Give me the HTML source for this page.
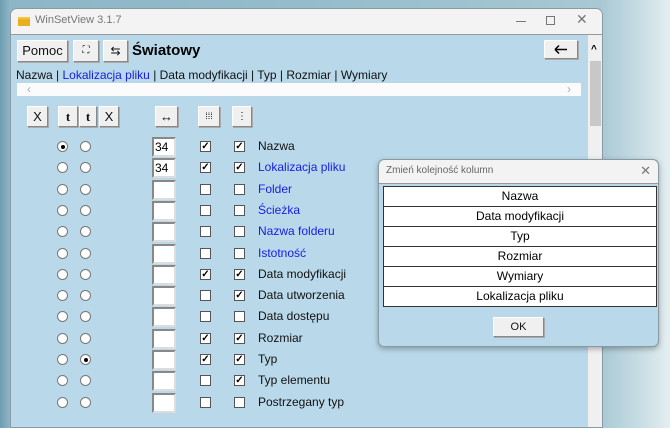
<!DOCTYPE html><html><head><meta charset="utf-8"><style>
*{margin:0;padding:0;box-sizing:border-box}
body{width:670px;height:416px;overflow:hidden;position:relative;font-family:"Liberation Sans",sans-serif;font-size:12px;background:linear-gradient(90deg,#6f9db0 0,#8db6c6 10px,#94bccb 300px,#a8c8d4 600px,#c8dde4 640px,#e4eef0 670px)}
.a{position:absolute}
.win{left:10px;top:8px;width:593px;height:420px;background:#b9d9ea;border:1px solid #8a9aa3;border-radius:7px 7px 0 0;overflow:hidden}
.tb{left:0;top:0;width:593px;height:26px;background:#f3f3f3;border-bottom:1px solid #999}
.btn{position:absolute;background:#f0f0f0;border:1px solid #fff;border-right-color:#888;border-bottom-color:#888;box-shadow:1px 1px 0 #aaa;text-align:center;font-size:13px;color:#111}
.rad{position:absolute;width:11px;height:11px;border:1px solid #777;border-radius:50%;background:#fff}
.rad.on::after{content:"";position:absolute;left:2.5px;top:2.5px;width:4px;height:4px;border-radius:50%;background:#000}
.tx{position:absolute;width:24px;height:20px;background:#fff;border:2px solid #888;border-right-color:#ddd;border-bottom-color:#ddd;font-size:12px;line-height:16px;padding-left:1px}
.cb{position:absolute;width:11px;height:11px;border:1px solid #555;background:#fff;font-size:10px;line-height:9px;text-align:center;font-weight:bold}
.lb{position:absolute;font-size:12px;color:#111}
.bl{color:#1a1ae6}
.dlg{left:378px;top:159px;width:281px;height:188px;background:#b9d9ea;border:1px solid #8a9aa3;border-radius:6px;box-shadow:0 2px 6px rgba(0,0,0,.3)}
.row{height:20px;border-bottom:1px solid #333;text-align:center;line-height:19px;font-size:12px;background:#fff}
</style></head><body>
<div class="a win">
 <div class="a tb">
  <div class="a" style="left:7px;top:8px;width:12px;height:9px;background:#e8b020;border-top:2px solid #f4c63a"></div>
  <div class="a" style="left:24px;top:5px;color:#777;font-size:11px">WinSetView 3.1.7</div>
  <div class="a" style="left:505px;top:12px;width:10px;height:1px;background:#777"></div>
  <div class="a" style="left:535px;top:7px;width:9px;height:9px;border:1px solid #777"></div>
  <div class="a" style="left:565px;top:2px;color:#777;font-size:14px">✕</div>
 </div>
 <div class="btn" style="left:6px;top:31px;width:51px;height:22px;line-height:20px">Pomoc</div>
 <div class="btn" style="left:62px;top:31px;width:26px;height:22px;line-height:20px;font-size:10px">⛶</div>
 <div class="btn" style="left:92px;top:31px;width:25px;height:22px;line-height:20px;font-size:12px">⇆</div>
 <div class="a" style="left:121px;top:33px;font-size:15px;font-weight:bold">Światowy</div>
 <div class="btn" style="left:533px;top:31px;width:34px;height:19px"><svg width="32" height="17" viewBox="0 0 32 17"><path d="M10 8.5H22M10 8.5L14 4.5M10 8.5L14 12.5" stroke="#000" stroke-width="1.5" fill="none"/></svg></div>
 <div class="a" style="left:5px;top:59px;font-size:12px;color:#111">Nazwa | <span class="bl">Lokalizacja pliku</span> | Data modyfikacji | Typ | Rozmiar | Wymiary</div>
 <div class="a" style="left:6px;top:74px;width:564px;height:13px;background:#fbfbfb;color:#aaa;font-size:12px;line-height:12px"><span style="position:absolute;left:10px">‹</span><span style="position:absolute;right:10px">›</span></div>
 <div class="a" style="left:577px;top:26px;width:16px;height:400px;background:#f0f0f0"><div class="a" style="left:3px;top:9px;font-size:10px;font-weight:bold">^</div><div class="a" style="left:2px;top:26px;width:11px;height:65px;background:#c8c8c8"></div></div>
 <div class="btn" style="left:16px;top:97px;width:21px;height:21px;line-height:19px">X</div>
 <div class="btn" style="left:47px;top:97px;width:20px;height:21px;line-height:19px;font-weight:bold;font-family:'Liberation Serif',serif">t</div>
 <div class="btn" style="left:68px;top:97px;width:18px;height:21px;line-height:19px;font-weight:bold;font-family:'Liberation Serif',serif">t</div>
 <div class="btn" style="left:88px;top:97px;width:20px;height:21px;line-height:19px">X</div>
 <div class="btn" style="left:144px;top:97px;width:23px;height:21px;line-height:19px">↔</div>
 <div class="btn" style="left:187px;top:97px;width:22px;height:21px;line-height:19px;font-size:9px">⁞⁞⁞</div>
 <div class="btn" style="left:221px;top:97px;width:20px;height:21px;line-height:19px;font-size:10px">⋮</div>
</div>
<div id="rows"></div>
<div class="a dlg">
 <div class="a" style="left:0;top:0;width:279px;height:24px;background:#f3f3f3;border-radius:6px 6px 0 0;border-bottom:1px solid #999"><span class="a" style="left:7px;top:5px;font-size:10px;color:#666">Zmień kolejność kolumn</span><span class="a" style="right:7px;top:3px;font-size:13px;color:#777">✕</span></div>
 <div class="a" style="left:4px;top:26px;width:274px;border:1px solid #333;border-bottom:0">
  <div class="row">Nazwa</div><div class="row">Data modyfikacji</div><div class="row">Typ</div><div class="row">Rozmiar</div><div class="row">Wymiary</div><div class="row">Lokalizacja pliku</div>
 </div>
 <div class="btn" style="left:114px;top:157px;width:51px;height:20px;line-height:18px;font-size:11px">OK</div>
</div>
<script>
var d=[["Nazwa",0,1,"34",1,1,0],["Lokalizacja pliku",1,0,"34",1,1,0],["Folder",1,0,"",0,0,0],["Ścieżka",1,0,"",0,0,0],["Nazwa folderu",1,0,"",0,0,0],["Istotność",1,0,"",0,0,0],["Data modyfikacji",0,0,"",1,1,0],["Data utworzenia",0,0,"",0,1,0],["Data dostępu",0,0,"",0,0,0],["Rozmiar",0,0,"",1,1,0],["Typ",0,0,"",1,1,1],["Typ elementu",0,0,"",0,1,0],["Postrzegany typ",0,0,"",0,0,0]];
var h="";d.forEach(function(r,i){var y=147+i*21.3;
h+='<div class="rad'+(r[2]?' on':'')+'" style="left:57px;top:'+(y-6)+'px"></div><div class="rad'+(r[6]?' on':'')+'" style="left:80px;top:'+(y-6)+'px"></div>';
h+='<div class="tx" style="left:152px;top:'+(y-10)+'px">'+r[3]+'</div>';
h+='<div class="cb" style="left:200px;top:'+(y-6)+'px">'+(r[4]?'✓':'')+'</div><div class="cb" style="left:234px;top:'+(y-6)+'px">'+(r[5]?'✓':'')+'</div>';
h+='<div class="lb'+(r[1]?' bl':'')+'" style="left:258px;top:'+(y-8)+'px">'+r[0]+'</div>';});
document.getElementById("rows").innerHTML=h;
</script>
</body></html>
